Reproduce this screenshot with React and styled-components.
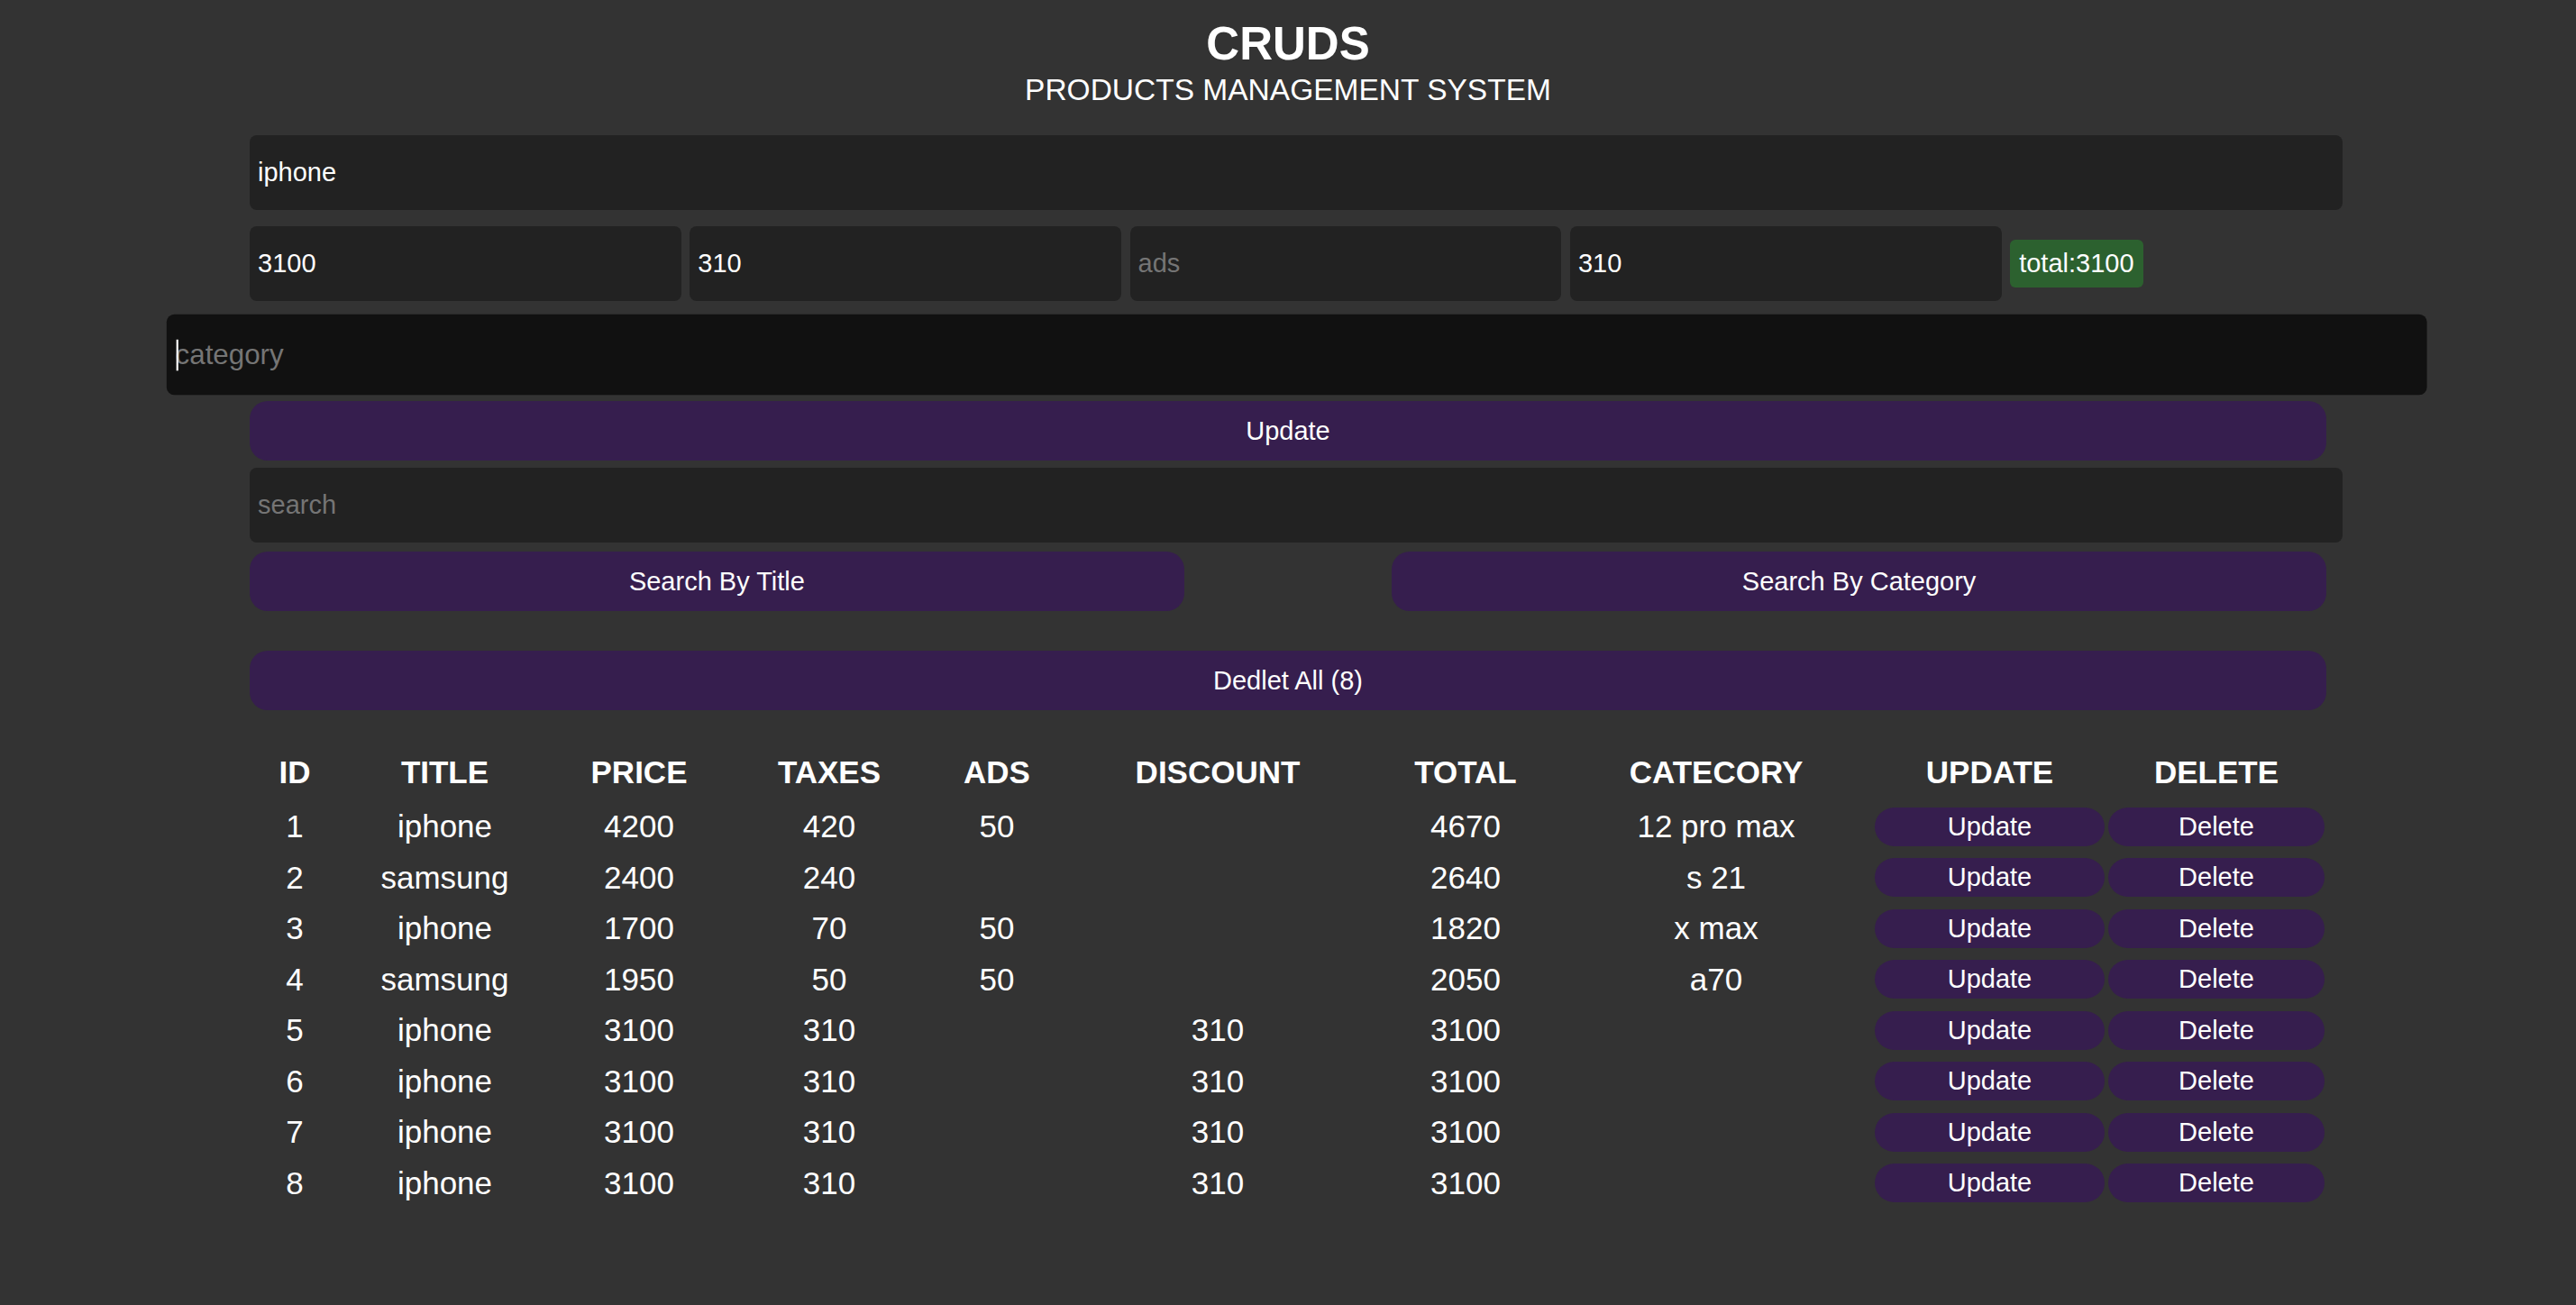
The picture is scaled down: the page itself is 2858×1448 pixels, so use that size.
import styled, { createGlobalStyle } from 'styled-components';

const GlobalStyle = createGlobalStyle`
    body {
        margin: 0;
        background: #333;
        color: #fff;
        font-family: "Liberation Sans", Arial, Helvetica, sans-serif;
    }
`;

const Page = styled.div`
    padding-top: 19px;
`;

const Head = styled.header`
    text-align: center;
    margin-bottom: 30px;
`;

const Titulo = styled.h1`
    margin: 0;
    font-size: 51px;
    line-height: 60px;
    font-weight: 700;
`;

const SubTitulo = styled.h2`
    margin: 1px 0 0;
    font-size: 33.5px;
    line-height: 40px;
    font-weight: 400;
`;

const Main = styled.div`
    width: 2304px;
    margin: 0 auto;
`;

const Field = styled.input`
    display: block;
    box-sizing: content-box;
    width: 100%;
    height: 83px;
    padding: 0 9px;
    margin: 0 0 ${p => p.$mb || 0}px;
    border: none;
    border-radius: 8px;
    outline: none;
    background: ${p => p.$dark ? '#111' : '#222'};
    color: #fff;
    font-family: inherit;
    font-size: 29px;
    &::placeholder {
        color: #757575;
    }
`;

const PriceRow = styled.div`
    display: flex;
    align-items: center;
    gap: 9.5px;
    margin-bottom: 18px;
`;

const SmallField = styled(Field)`
    width: 20%;
    flex: none;
`;

const Total = styled.small`
    display: block;
    height: 53px;
    line-height: 53px;
    padding: 0 10px;
    border-radius: 6px;
    background: #2c612f;
    font-size: 29px;
`;

const Focused = styled.div`
    position: relative;
    transform: scale(1.08);
    margin-bottom: 10px;
`;

const Caret = styled.span`
    position: absolute;
    left: 10px;
    top: 50%;
    width: 2px;
    height: 32px;
    margin-top: -16px;
    background: #fff;
`;

const Button = styled.button`
    display: block;
    width: ${p => p.$w || '100%'};
    height: 66px;
    margin: 0 0 ${p => p.$mb || 0}px;
    padding: 0;
    border: none;
    border-radius: 20px;
    background: #361e4e;
    color: #fff;
    font-family: inherit;
    font-size: 29px;
    cursor: pointer;
`;

const SearchRow = styled.div`
    display: flex;
    justify-content: space-between;
    margin-bottom: 44px;
`;

const Table = styled.table`
    width: 100%;
    table-layout: fixed;
    border-collapse: collapse;
    margin-top: 37px;
`;

const Th = styled.th`
    height: 64px;
    padding: 0;
    font-size: 35px;
    font-weight: 700;
    text-align: center;
    vertical-align: middle;
`;

const Td = styled.td`
    height: 56.5px;
    padding: 0 2px;
    font-size: 35px;
    text-align: center;
    vertical-align: middle;
`;

const RowButton = styled.button`
    display: block;
    width: 100%;
    height: 43px;
    padding: 0;
    border: none;
    border-radius: 22px;
    background: #361e4e;
    color: #fff;
    font-family: inherit;
    font-size: 29px;
    cursor: pointer;
`;

const colunas = [
    ['ID', 100], ['TITLE', 233], ['PRICE', 198], ['TAXES', 224], ['ADS', 148],
    ['DISCOUNT', 342], ['TOTAL', 208], ['CATECORY', 348], ['UPDATE', 259], ['DELETE', 244],
];

const produtos = [
    { id: 1, title: 'iphone', price: 4200, taxes: 420, ads: 50, discount: '', total: 4670, category: '12 pro max' },
    { id: 2, title: 'samsung', price: 2400, taxes: 240, ads: '', discount: '', total: 2640, category: 's 21' },
    { id: 3, title: 'iphone', price: 1700, taxes: 70, ads: 50, discount: '', total: 1820, category: 'x max' },
    { id: 4, title: 'samsung', price: 1950, taxes: 50, ads: 50, discount: '', total: 2050, category: 'a70' },
    { id: 5, title: 'iphone', price: 3100, taxes: 310, ads: '', discount: 310, total: 3100, category: '' },
    { id: 6, title: 'iphone', price: 3100, taxes: 310, ads: '', discount: 310, total: 3100, category: '' },
    { id: 7, title: 'iphone', price: 3100, taxes: 310, ads: '', discount: 310, total: 3100, category: '' },
    { id: 8, title: 'iphone', price: 3100, taxes: 310, ads: '', discount: 310, total: 3100, category: '' },
];

function App() {
  return (
    <Page>
      <GlobalStyle />
      <Head>
        <Titulo>CRUDS</Titulo>
        <SubTitulo>PRODUCTS MANAGEMENT SYSTEM</SubTitulo>
      </Head>
      <Main>
        <Field $mb={18} type="text" placeholder="title" defaultValue="iphone" />
        <PriceRow>
          <SmallField type="number" placeholder="price" defaultValue="3100" />
          <SmallField type="number" placeholder="taxes" defaultValue="310" />
          <SmallField type="number" placeholder="ads" />
          <SmallField type="number" placeholder="discount" defaultValue="310" />
          <Total>total:3100</Total>
        </PriceRow>
        <Focused>
          <Field $dark type="text" placeholder="category" />
          <Caret />
        </Focused>
        <Button $mb={8}>Update</Button>
        <Field $mb={10} type="text" placeholder="search" />
        <SearchRow>
          <Button $w="45%">Search By Title</Button>
          <Button $w="45%">Search By Category</Button>
        </SearchRow>
        <Button>Dedlet All (8)</Button>
        <Table>
          <colgroup>
            {colunas.map(([nome, largura]) => <col key={nome} style={{ width: largura }} />)}
          </colgroup>
          <thead>
            <tr>
              {colunas.map(([nome]) => <Th key={nome}>{nome}</Th>)}
            </tr>
          </thead>
          <tbody>
            {produtos.map(p => (
              <tr key={p.id}>
                <Td>{p.id}</Td>
                <Td>{p.title}</Td>
                <Td>{p.price}</Td>
                <Td>{p.taxes}</Td>
                <Td>{p.ads}</Td>
                <Td>{p.discount}</Td>
                <Td>{p.total}</Td>
                <Td>{p.category}</Td>
                <Td><RowButton>Update</RowButton></Td>
                <Td><RowButton>Delete</RowButton></Td>
              </tr>
            ))}
          </tbody>
        </Table>
      </Main>
    </Page>
  );
}

export default App;
